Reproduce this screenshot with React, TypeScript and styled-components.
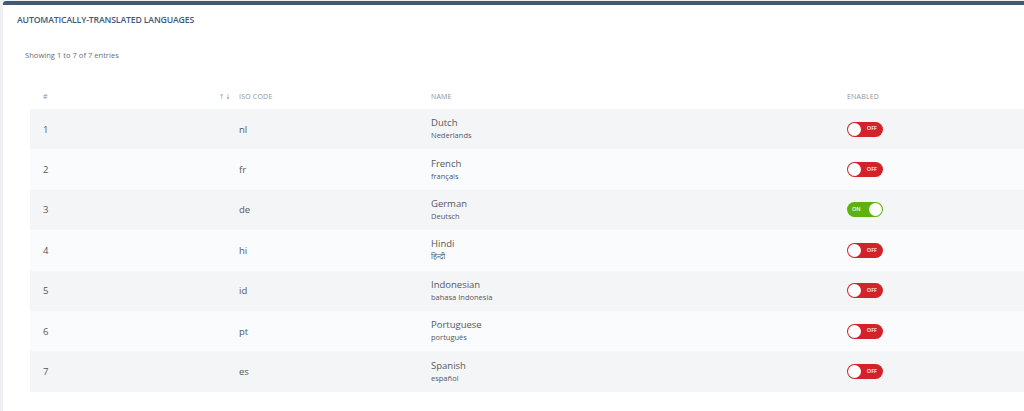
import React from "react";
import styled, { createGlobalStyle } from "styled-components";

const Global = createGlobalStyle`
  html, body { margin: 0; padding: 0; background: #eef0f2; }
  body { font-family: "Open Sans", "Noto Sans", "DejaVu Sans", sans-serif; }
`;

const Card = styled.div`
  margin: 1px 0 0 3px;
  min-height: 410px;
  background: #ffffff;
  border-top: 4px solid #3f5b74;
  border-top-left-radius: 3px;
  overflow: hidden;
  box-sizing: border-box;
`;

const Title = styled.h2`
  margin: 0;
  padding: 8px 0 0 14px;
  font-size: 8.7px;
  line-height: 14px;
  font-weight: 600;
  color: #40597a;
  letter-spacing: -0.15px;
`;

const Info = styled.div`
  padding: 22px 0 0 22px;
  font-size: 7.6px;
  line-height: 12px;
  color: #6b6f75;
`;

const Table = styled.div`
  margin: 23px 0 0 27px;
  width: 1000px;
`;

const Row = styled.div<{ $shade?: "odd" | "even" | "head" }>`
  display: grid;
  grid-template-columns: 209px 192px 416px 1fr;
  align-items: center;
  height: ${(p) => (p.$shade === "head" ? "25px" : "40.4px")};
  background: ${(p) =>
    p.$shade === "odd" ? "#f4f5f7" : p.$shade === "even" ? "#fafbfc" : "transparent"};
`;

const HeadCell = styled.div<{ $first?: boolean }>`
  font-size: 7px;
  letter-spacing: 0.2px;
  color: #8f949a;
  text-transform: uppercase;
  padding-left: ${(p) => (p.$first ? "13px" : "0")};
  display: flex;
  justify-content: space-between;
  padding-right: ${(p) => (p.$first ? "8px" : "0")};
`;

const Cell = styled.div<{ $first?: boolean }>`
  font-size: 9.5px;
  color: #55595e;
  padding-left: ${(p) => (p.$first ? "13px" : "0")};
`;

const NameBlock = styled.div`
  display: flex;
  flex-direction: column;
  gap: 1px;
`;

const Name = styled.span`
  font-size: 9.5px;
  line-height: 12px;
  color: #55595e;
`;

const Native = styled.span`
  font-size: 7.5px;
  line-height: 11px;
  color: #55595e;
  font-family: "Open Sans", "Noto Sans", "Noto Sans Devanagari", "DejaVu Sans", sans-serif;
`;

const Toggle = styled.div<{ $on: boolean }>`
  position: relative;
  width: 36px;
  height: 15px;
  border-radius: 8px;
  background: ${(p) => (p.$on ? "#5eb20f" : "#d4222a")};
  box-sizing: border-box;
  display: flex;
  align-items: center;
  justify-content: ${(p) => (p.$on ? "flex-start" : "flex-end")};
  padding-left: ${(p) => (p.$on ? "5px" : "0")};
  padding-right: ${(p) => (p.$on ? "0" : "6px")};
`;

const Knob = styled.span<{ $on: boolean }>`
  position: absolute;
  top: 1px;
  ${(p) => (p.$on ? "right: 1px;" : "left: 1px;")}
  width: 13px;
  height: 13px;
  border-radius: 50%;
  background: #ffffff;
`;

const ToggleText = styled.span`
  font-size: 5.5px;
  font-weight: 600;
  color: #ffffff;
  line-height: 1;
`;

const SortMark = styled.span`
  font-size: 7px;
  color: #a0a4a9;
`;

const rows = [
  ["1", "nl", "Dutch", "Nederlands", false],
  ["2", "fr", "French", "français", false],
  ["3", "de", "German", "Deutsch", true],
  ["4", "hi", "Hindi", "हिन्दी", false],
  ["5", "id", "Indonesian", "bahasa Indonesia", false],
  ["6", "pt", "Portuguese", "português", false],
  ["7", "es", "Spanish", "español", false],
] as const;

export default function App() {
  return (
    <>
      <Global />
      <Card>
        <Title>AUTOMATICALLY-TRANSLATED LANGUAGES</Title>
        <Info>Showing 1 to 7 of 7 entries</Info>
        <Table>
          <Row $shade="head">
            <HeadCell $first>
              <span>#</span>
              <SortMark>↑↓</SortMark>
            </HeadCell>
            <HeadCell>ISO Code</HeadCell>
            <HeadCell>Name</HeadCell>
            <HeadCell>Enabled</HeadCell>
          </Row>
          {rows.map(([n, code, name, native, on], i) => (
            <Row key={n} $shade={i % 2 === 0 ? "odd" : "even"}>
              <Cell $first>{n}</Cell>
              <Cell>{code}</Cell>
              <NameBlock>
                <Name>{name}</Name>
                <Native>{native}</Native>
              </NameBlock>
              <div>
                <Toggle $on={on}>
                  <Knob $on={on} />
                  <ToggleText>{on ? "ON" : "OFF"}</ToggleText>
                </Toggle>
              </div>
            </Row>
          ))}
        </Table>
      </Card>
    </>
  );
}
